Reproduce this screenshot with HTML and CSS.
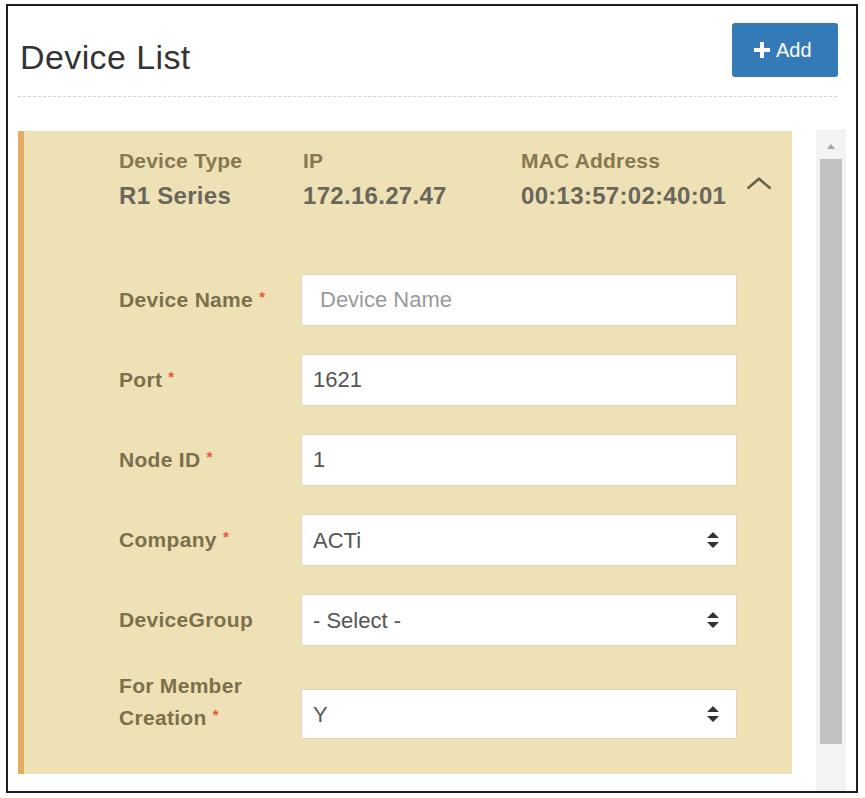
FILE: index.html
```html
<!DOCTYPE html>
<html lang="en">
<head>
    <meta charset="UTF-8">
    <meta name="viewport" content="width=device-width, initial-scale=1.0">
    <title>Device List</title>
    <link rel="stylesheet" href="styles.css">
</head>
<body>
    <div class="frame">
        <div class="page-head">
            <h1>Device List</h1>
            <button class="btn-add">
                <svg class="plus" viewBox="0 0 16 16" width="16" height="16"><path d="M6 0h4v6h6v4h-6v6H6v-6H0V6h6z" fill="#fff"/></svg>Add
            </button>
        </div>

        <div class="list-wrap">
            <div class="device-card">
                <div class="device-head">
                    <div class="col col-type">
                        <div class="head-label">Device Type</div>
                        <div class="head-value">R1 Series</div>
                    </div>
                    <div class="col col-ip">
                        <div class="head-label">IP</div>
                        <div class="head-value">172.16.27.47</div>
                    </div>
                    <div class="col col-mac">
                        <div class="head-label">MAC Address</div>
                        <div class="head-value">00:13:57:02:40:01</div>
                    </div>
                    <svg class="chevron" viewBox="0 0 26 13" width="26" height="13"><path d="M1.5 11.5L13 1.8l11.5 9.7" fill="none" stroke="#67624f" stroke-width="2.6"/></svg>
                </div>

                <div class="device-form">
                    <div class="form-row">
                        <label class="form-label">Device Name <span class="req">*</span></label>
                        <input class="form-control input-name" type="text" placeholder="Device Name">
                    </div>
                    <div class="form-row">
                        <label class="form-label">Port <span class="req">*</span></label>
                        <input class="form-control" type="text" value="1621">
                    </div>
                    <div class="form-row">
                        <label class="form-label">Node ID <span class="req">*</span></label>
                        <input class="form-control" type="text" value="1">
                    </div>
                    <div class="form-row">
                        <label class="form-label">Company <span class="req">*</span></label>
                        <div class="select-wrap">
                            <select class="form-control"><option>ACTi</option></select>
                            <svg class="sort" viewBox="0 0 12 16" width="12" height="16"><path d="M6 0L12 6H0z M0 10h12L6 16z" fill="#333"/></svg>
                        </div>
                    </div>
                    <div class="form-row">
                        <label class="form-label">DeviceGroup</label>
                        <div class="select-wrap">
                            <select class="form-control"><option>- Select -</option></select>
                            <svg class="sort" viewBox="0 0 12 16" width="12" height="16"><path d="M6 0L12 6H0z M0 10h12L6 16z" fill="#333"/></svg>
                        </div>
                    </div>
                    <div class="form-row row-tall">
                        <label class="form-label">For Member<br>Creation <span class="req">*</span></label>
                        <div class="select-wrap">
                            <select class="form-control"><option>Y</option></select>
                            <svg class="sort" viewBox="0 0 12 16" width="12" height="16"><path d="M6 0L12 6H0z M0 10h12L6 16z" fill="#333"/></svg>
                        </div>
                    </div>
                </div>
            </div>

            <div class="scrollbar">
                <svg class="scroll-up" viewBox="0 0 8 5" width="8" height="5"><path d="M4 0l4 5H0z" fill="#a3a3a3"/></svg>
                <div class="scroll-thumb"></div>
            </div>
        </div>
    </div>
</body>
</html>
```

FILE: styles.css
```css
body {
    margin: 0;
    background-color: #fff;
    font-family: "Liberation Sans", Arial, Helvetica, sans-serif;
}

.frame {
    box-sizing: border-box;
    width: 852px;
    height: 789px;
    margin: 4px 0 0 6px;
    border: 2px solid #1e1e1e;
    background-color: #fff;
}

.page-head {
    display: flex;
    justify-content: space-between;
    align-items: flex-start;
    margin: 0 19px 0 10px;
    padding-top: 16px;
    padding-bottom: 19px;
    border-bottom: 1px dashed #d4d4d4;
}

h1 {
    margin: 16px 0 0 2px;
    font-size: 34px;
    line-height: 38px;
    font-weight: normal;
    color: #333;
    letter-spacing: 0.4px;
}

.btn-add {
    display: flex;
    align-items: center;
    height: 54px;
    width: 106px;
    margin: 1px -1px 0 0;
    padding: 0 0 0 22px;
    border: none;
    border-radius: 3px;
    background-color: #337ab7;
    color: #fff;
    font-family: inherit;
    font-size: 20px;
    cursor: pointer;
}

.plus {
    margin-right: 6px;
    margin-top: -1px;
}

.list-wrap {
    display: flex;
    align-items: flex-start;
    margin-top: 34px;
    margin-left: 10px;
}

.device-card {
    box-sizing: border-box;
    width: 774px;
    padding: 12px 0 35px 95px;
    border-left: 6px solid #e2ad62;
    background-color: #eee1b6;
}

.device-head {
    display: flex;
    font-weight: bold;
    line-height: 35px;
}

.col-type {
    width: 184px;
}

.col-ip {
    width: 218px;
}

.head-label {
    font-size: 21px;
    letter-spacing: 0.2px;
    color: #877850;
}

.head-value {
    font-size: 24px;
    letter-spacing: 0.3px;
    color: #6a675a;
}

.chevron {
    margin: 34px 0 0 20px;
}

.device-form {
    display: flex;
    flex-direction: column;
    gap: 28px;
    margin-top: 61px;
}

.form-row {
    display: flex;
    align-items: center;
}

.form-label {
    width: 182px;
    font-size: 21px;
    font-weight: bold;
    letter-spacing: 0.3px;
    color: #7b704c;
}

.req {
    color: #e8553d;
    font-size: 15px;
    vertical-align: 5px;
}

.form-control {
    box-sizing: border-box;
    width: 436px;
    height: 52px;
    padding: 0 11px;
    border: 1px solid #ddd5bd;
    border-radius: 1px;
    background-color: #fff;
    font-family: inherit;
    font-size: 22px;
    color: #555;
}

.input-name {
    padding-left: 18px;
}

.form-control::placeholder {
    color: #9a9a9a;
}

select.form-control {
    appearance: none;
    -webkit-appearance: none;
}

.select-wrap {
    position: relative;
}

.sort {
    position: absolute;
    right: 18px;
    top: 18px;
}

.row-tall {
    align-items: flex-start;
    margin-top: -2px;
    line-height: 29px;
}

.row-tall .form-label {
    margin-top: -1px;
}

.row-tall .select-wrap {
    margin-top: 17px;
}

.row-tall .form-control {
    height: 50px;
}

.row-tall .sort {
    top: 17px;
}

.scrollbar {
    position: relative;
    box-sizing: border-box;
    width: 30px;
    height: 662px;
    margin-left: 24px;
    margin-top: -2px;
    padding: 30px 4px 0;
    background-color: #f3f3f3;
}

.scroll-up {
    position: absolute;
    top: 15px;
    left: 11px;
}

.scroll-thumb {
    height: 585px;
    background-color: #c1c1c1;
}
```
